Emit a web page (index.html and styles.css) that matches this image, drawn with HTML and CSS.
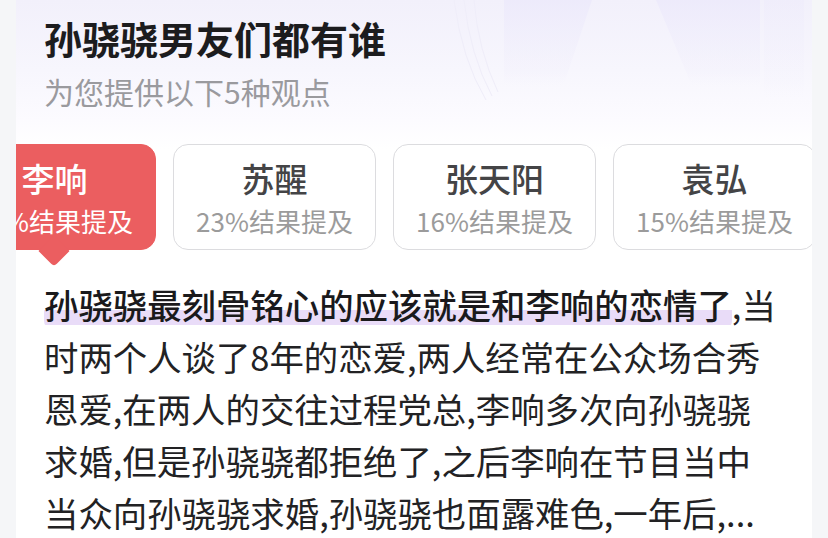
FILE: index.html
```html
<!DOCTYPE html>
<html lang="zh-CN">
<head>
<meta charset="utf-8">
<title>孙骁骁男友们都有谁</title>
<link rel="stylesheet" href="styles.css">
</head>
<body>
<main class="page">
  <section class="card">
    <svg class="deco" viewBox="0 0 366 140" width="366" height="140" aria-hidden="true">
      <defs>
        <linearGradient id="fade" x1="0" y1="0" x2="0" y2="1">
          <stop offset="0" stop-color="#ebe8fb" stop-opacity="0.7"/>
          <stop offset="0.75" stop-color="#f0eefb" stop-opacity="0.25"/>
          <stop offset="1" stop-color="#ffffff" stop-opacity="0"/>
        </linearGradient>
      </defs>
      <path d="M8 0 Q16 60 40 100" fill="none" stroke="#efedf9" stroke-width="1"/>
      <path d="M18 0 Q24 55 46 96" fill="none" stroke="#efedf9" stroke-width="1"/>
      <path d="M28 0 Q32 50 52 92" fill="none" stroke="#efedf9" stroke-width="1"/>
      <path d="M58 0 L146 0 L118 84 Q112 98 98 98 L72 98 Q58 98 58 84 Z" fill="url(#fade)"/>
      <path d="M210 0 L314 0 L314 98 L262 98 Q250 98 246 86 Z" fill="url(#fade)"/>
      <rect x="318" y="0" width="40" height="110" fill="url(#fade)" opacity="0.5"/>
    </svg>

    <header class="head">
      <h1 class="title">孙骁骁男友们都有谁</h1>
      <p class="subtitle">为您提供以下5种观点</p>
    </header>

    <div class="tabs">
      <ul class="tab-track">
        <li class="tab is-active">
          <span class="tab-name">李响</span>
          <span class="tab-meta">46%结果提及</span>
        </li>
        <li class="tab">
          <span class="tab-name">苏醒</span>
          <span class="tab-meta">23%结果提及</span>
        </li>
        <li class="tab">
          <span class="tab-name">张天阳</span>
          <span class="tab-meta">16%结果提及</span>
        </li>
        <li class="tab">
          <span class="tab-name">袁弘</span>
          <span class="tab-meta">15%结果提及</span>
        </li>
      </ul>
    </div>

    <p class="answer"><span class="hl">孙骁骁最刻骨铭心的应该就是和李响的恋情了</span>,当时两个人谈了8年的恋爱,两人经常在公众场合秀恩爱,在两人的交往过程党总,李响多次向孙骁骁求婚,但是孙骁骁都拒绝了,之后李响在节目当中当众向孙骁骁求婚,孙骁骁也面露难色,一年后,...</p>
  </section>
</main>
</body>
</html>
```

FILE: styles.css
```css
* {
  box-sizing: border-box;
}

html, body {
  margin: 0;
  padding: 0;
}

body {
  background: #f5f6f8;
  font-family: "Noto Sans CJK SC", "Noto Sans", sans-serif;
  color: #222;
}

.page {
  padding: 0 16px;
}

.card {
  position: relative;
  overflow: hidden;
  min-height: 538px;
  padding: 14px 28px 0;
  background: linear-gradient(180deg, #f2f0fb 0px, #f7f6fd 70px, #fcfbff 120px, #ffffff 150px);
}

.deco {
  position: absolute;
  top: 0;
  left: 430px;
  display: block;
}

.head {
  position: relative;
}

.title {
  margin: 0;
  font-size: 38px;
  line-height: 48px;
  font-weight: 700;
  color: #1c1c1e;
}

.subtitle {
  margin: 9px 0 0;
  font-size: 30px;
  line-height: 40px;
  color: #9a9a9e;
}

.tabs {
  position: relative;
  margin: 33px -28px 0;
  padding-bottom: 17px;
  overflow: hidden;
}

.tab-track {
  display: flex;
  gap: 17px;
  margin: 0 0 0 -63px;
  padding: 0;
  list-style: none;
}

.tab {
  position: relative;
  flex: 0 0 203px;
  height: 106px;
  display: flex;
  flex-direction: column;
  align-items: center;
  justify-content: center;
  gap: 5px;
  border: 1.5px solid #dcdcdf;
  border-radius: 15px;
  background: #ffffff;
  white-space: nowrap;
}

.tab-name {
  font-size: 33px;
  line-height: 42px;
  font-weight: 500;
  color: #444446;
}

.tab-meta {
  font-size: 26px;
  line-height: 34px;
  color: #9b9b9b;
}

.tab.is-active {
  background: #eb5e60;
  border-color: #eb5e60;
}

.tab.is-active .tab-name,
.tab.is-active .tab-meta {
  color: #ffffff;
}

.tab.is-active::after {
  content: "";
  position: absolute;
  left: 89px;
  bottom: -13px;
  width: 22px;
  height: 22px;
  background: #eb5e60;
  transform: rotate(45deg);
  border-bottom-right-radius: 4px;
}

.answer {
  width: 734px;
  margin: 11px 0 0;
  font-size: 34.4px;
  line-height: 52px;
  color: #222224;
}

.hl {
  font-weight: 500;
  color: #1a1a1c;
  background-image: linear-gradient(#e9dcf8, #e9dcf8);
  background-repeat: no-repeat;
  background-size: 100% 15px;
  background-position: 0 calc(100% - 4px);
  border-radius: 8px;
}
```
